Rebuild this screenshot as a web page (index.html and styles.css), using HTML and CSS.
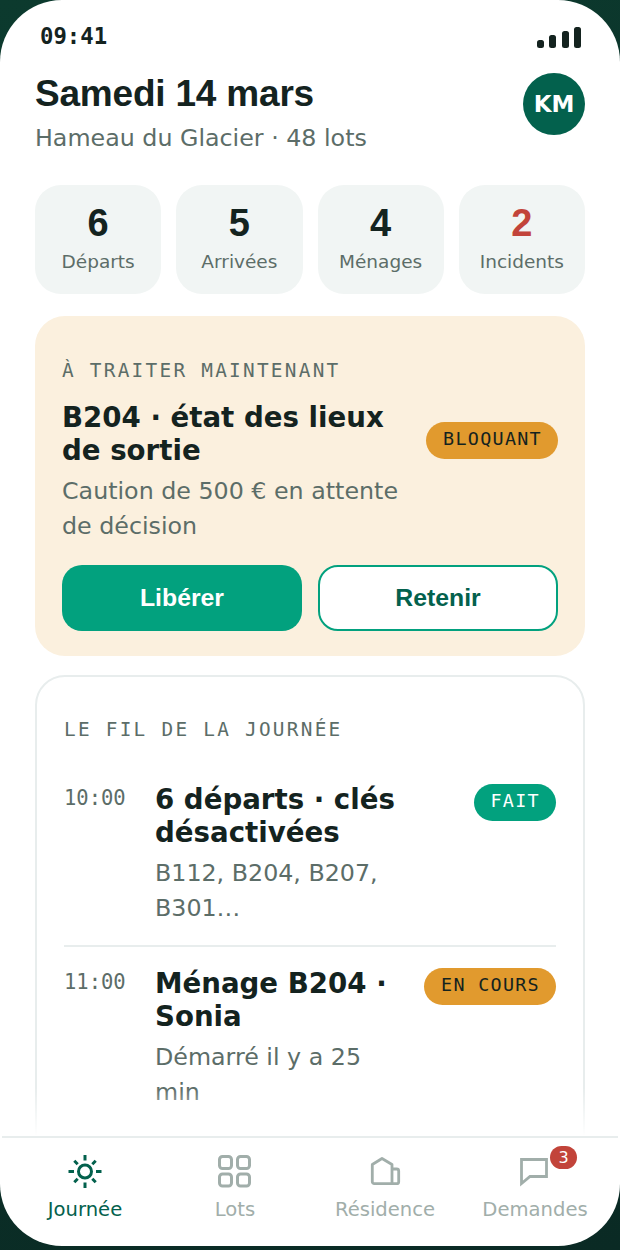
FILE: index.html
```html
<html>
<head>
<meta charset="utf-8" />
<title>Journée</title>
<link rel="stylesheet" href="styles.css">
</head>
<body>
<div class="screen">
	<div class="status">
		<span class="clock">09:41</span>
		<svg class="signal" width="44" height="22" viewBox="0 0 44 22">
			<rect x="0" y="14" width="7" height="8" rx="2.5"/>
			<rect x="12" y="9" width="7" height="13" rx="2.5"/>
			<rect x="25" y="5" width="7" height="17" rx="2.5"/>
			<rect x="37" y="1" width="7" height="21" rx="2.5"/>
		</svg>
	</div>
	<div class="main">
		<div class="header">
			<div>
				<h1>Samedi 14 mars</h1>
				<p class="place">Hameau du Glacier · 48 lots</p>
			</div>
			<div class="avatar">KM</div>
		</div>
		<div class="stats">
			<div class="stat"><b>6</b><span>Départs</span></div>
			<div class="stat"><b>5</b><span>Arrivées</span></div>
			<div class="stat"><b>4</b><span>Ménages</span></div>
			<div class="stat"><b class="red">2</b><span>Incidents</span></div>
		</div>
		<div class="alert">
			<div class="eyebrow">À TRAITER MAINTENANT</div>
			<div class="alert-row">
				<div class="item-text">
					<div class="title">B204 · état des lieux de sortie</div>
					<div class="sub">Caution de 500 € en attente de décision</div>
				</div>
				<span class="pill amber">BLOQUANT</span>
			</div>
			<div class="buttons">
				<button class="btn primary">Libérer</button>
				<button class="btn outline">Retenir</button>
			</div>
		</div>
		<div class="feed">
			<div class="eyebrow">LE FIL DE LA JOURNÉE</div>
			<div class="item first">
				<div class="time">10:00</div>
				<div class="item-text">
					<div class="title">6 départs · clés désactivées</div>
					<div class="sub">B112, B204, B207, B301…</div>
				</div>
				<span class="pill green">FAIT</span>
			</div>
			<div class="item">
				<div class="time">11:00</div>
				<div class="item-text">
					<div class="title">Ménage B204 · Sonia</div>
					<div class="sub">Démarré il y a 25 min</div>
				</div>
				<span class="pill amber">EN COURS</span>
			</div>
		</div>
		<div class="fade"></div>
	</div>
	<div class="nav">
		<div class="tab active">
			<svg width="36" height="36" viewBox="0 0 36 36" fill="none" stroke="currentColor" stroke-width="3">
				<circle cx="18" cy="16.500" r="6.500"/>
				<path d="M18 0v5.500M18 27.500V33M1.500 16.500H7M29 16.500h5.500M7.300 5.800l3.400 3.400M25.300 23.800l3.400 3.400M7.300 27.200l3.400-3.400M25.300 9.200l3.400-3.400"/>
			</svg>
			<span>Journée</span>
		</div>
		<div class="tab">
			<svg width="36" height="36" viewBox="0 0 36 36" fill="none" stroke="currentColor" stroke-width="3">
				<rect x="2.500" y="1.500" width="12" height="12" rx="3"/>
				<rect x="20.500" y="1.500" width="12" height="12" rx="3"/>
				<rect x="2.500" y="19" width="12" height="12" rx="3"/>
				<rect x="20.500" y="19" width="12" height="12" rx="3"/>
			</svg>
			<span>Lots</span>
		</div>
		<div class="tab">
			<svg width="36" height="36" viewBox="0 0 36 36" fill="none" stroke="currentColor" stroke-width="2.800" stroke-linejoin="round">
				<path d="M5.300 9.500L15 3.500L25 9.500V28.700H7.300a2 2 0 0 1-2-2z"/>
				<path d="M25 14h4.700a2 2 0 0 1 2 2v10.700a2 2 0 0 1-2 2H25"/>
			</svg>
			<span>Résidence</span>
		</div>
		<div class="tab">
			<div class="tab-icon">
				<svg width="36" height="36" viewBox="0 0 36 36" fill="none" stroke="currentColor" stroke-width="2.800">
					<path d="M4.500 4.500h25v17H13l-8.500 7z"/>
				</svg>
				<span class="badge">3</span>
			</div>
			<span>Demandes</span>
		</div>
	</div>
</div>
</body>
</html>
```

FILE: styles.css
```css
* {
	box-sizing: border-box;
}

body {
	margin: 0;
	height: 1250px;
	background: linear-gradient(160deg, #0c3a2e, #0a2a24);
	font-family: "DejaVu Sans", sans-serif;
	color: #14231f;
	overflow: hidden;
}

.screen {
	height: 1246px;
	background: #fff;
	border-radius: 62px;
	display: flex;
	flex-direction: column;
	overflow: hidden;
}

.status {
	height: 73px;
	flex: none;
	padding: 22px 39px 0 40px;
	display: flex;
	justify-content: space-between;
	align-items: flex-start;
}

.clock {
	font-family: "DejaVu Sans Mono", monospace;
	font-weight: bold;
	font-size: 22.300px;
	line-height: 28px;
}

.signal {
	margin-top: 4px;
	fill: #14231f;
}

.main {
	flex: 1;
	min-height: 0;
	padding: 0 35px;
	position: relative;
	overflow: hidden;
}

.header {
	display: flex;
	justify-content: space-between;
	align-items: flex-start;
}

h1 {
	margin: 0;
	font-family: "Liberation Sans", sans-serif;
	font-size: 37px;
	line-height: 42px;
	letter-spacing: -0.200px;
}

.place {
	margin: 8px 0 0;
	font-size: 23.760px;
	line-height: 30px;
	color: #5c6d68;
}

.avatar {
	width: 62px;
	height: 62px;
	border-radius: 50%;
	background: #03614d;
	color: #fff;
	font-weight: bold;
	font-size: 23px;
	display: flex;
	align-items: center;
	justify-content: center;
}

.stats {
	margin-top: 32px;
	display: grid;
	grid-template-columns: repeat(4, 1fr);
	gap: 15px;
}

.stat {
	height: 109px;
	border-radius: 26px;
	background: #f1f5f4;
	display: flex;
	flex-direction: column;
	align-items: center;
	padding-top: 16px;
}

.stat b {
	font-family: "Liberation Sans", sans-serif;
	font-size: 38px;
	line-height: 44px;
}

.stat span {
	font-size: 18.500px;
	line-height: 28px;
	color: #5c6d68;
	margin-top: 3px;
}

.red {
	color: #c2443a;
}

.alert {
	margin-top: 22px;
	height: 340px;
	padding: 43px 27px 25px;
	background: #fbf0de;
	border-radius: 30px;
}

.eyebrow {
	font-family: "DejaVu Sans Mono", monospace;
	font-size: 19.400px;
	line-height: 24px;
	letter-spacing: 2.250px;
	color: #5c6d68;
}

.alert-row {
	margin-top: 19px;
	display: flex;
	align-items: flex-start;
	justify-content: space-between;
	gap: 20px;
}

.alert-row .pill {
	margin-top: 20px;
}

.title {
	font-size: 27.650px;
	line-height: 33px;
	font-weight: bold;
}

.sub {
	margin-top: 7px;
	font-size: 23.760px;
	line-height: 34.500px;
	color: #5c6d68;
}

.pill {
	flex: none;
	height: 37px;
	padding: 0 16px 0 17px;
	border-radius: 19px;
	font-family: "DejaVu Sans Mono", monospace;
	font-size: 18.400px;
	line-height: 33px;
	letter-spacing: 1.300px;
}

.amber {
	background: #e19a2e;
	color: #14231f;
}

.green {
	background: #02a17e;
	color: #fff;
}

.buttons {
	margin-top: 22px;
	display: grid;
	grid-template-columns: 1fr 1fr;
	gap: 16px;
}

.btn {
	height: 66px;
	border-radius: 20px;
	font-family: "Liberation Sans", sans-serif;
	font-size: 24.800px;
	font-weight: bold;
	padding: 0;
}

.primary {
	background: #02a17e;
	border: 0;
	color: #fff;
}

.outline {
	background: #fff;
	border: 2px solid #02a17e;
	color: #03614d;
}

.feed {
	margin-top: 19px;
	padding: 41px 27px 0;
	height: 500px;
	border: 2px solid #e8eded;
	border-radius: 30px;
}

.item {
	display: flex;
	align-items: flex-start;
	gap: 16px;
	padding: 21px 0 20px;
	border-top: 2px solid #e8eded;
}

.item.first {
	margin-top: 18px;
	padding-top: 24px;
	border-top: 0;
}

.time {
	flex: none;
	width: 75px;
	font-family: "DejaVu Sans Mono", monospace;
	font-size: 20.500px;
	line-height: 28px;
	color: #5c6d68;
}

.item-text {
	flex: 1;
	margin-top: -1px;
}

.fade {
	position: absolute;
	left: 0;
	right: 0;
	bottom: 0;
	height: 48px;
	background: linear-gradient(rgba(255, 255, 255, 0), #fff);
}

.nav {
	flex: none;
	height: 110px;
	margin: 0 2px;
	padding: 0 8px;
	border-top: 2px solid #e8eded;
	display: grid;
	grid-template-columns: repeat(4, 1fr);
}

.tab {
	display: flex;
	flex-direction: column;
	align-items: center;
	padding-top: 17px;
	color: #a1aeaa;
	font-size: 19.600px;
	line-height: 30px;
}

.tab svg {
	display: block;
}

.tab > span {
	margin-top: 4px;
}

.tab.active {
	color: #03614d;
}

.tab-icon {
	position: relative;
}

.badge {
	position: absolute;
	top: -9px;
	left: 33px;
	width: 27px;
	height: 23px;
	border-radius: 12px;
	background: #c2443a;
	color: #fff;
	font-size: 16px;
	line-height: 23px;
	text-align: center;
}
```
